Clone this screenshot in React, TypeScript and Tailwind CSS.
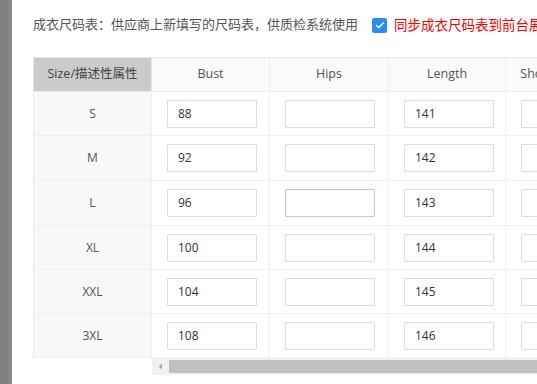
import React from "react";

const rows: { label: string; bust: string; length: string; h: number }[] = [
  { label: "S", bust: "88", length: "141", h: 44 },
  { label: "M", bust: "92", length: "142", h: 45 },
  { label: "L", bust: "96", length: "143", h: 45 },
  { label: "XL", bust: "100", length: "144", h: 44 },
  { label: "XXL", bust: "104", length: "145", h: 44 },
  { label: "3XL", bust: "108", length: "146", h: 44 },
];

const cols = [
  { name: "Bust", w: 118, key: "bust" },
  { name: "Hips", w: 119, key: "hips" },
  { name: "Length", w: 117, key: "length" },
  { name: "Shoulder Width", w: 120, key: "shoulder" },
];

function Cell({ value, focused }: { value: string; focused?: boolean }) {
  return (
    <div
      className={
        "ml-[15px] w-[90px] h-[28px] flex items-center pl-[10px] text-[12px] text-[#333] bg-white border rounded-[1px] " +
        (focused ? "border-[#b3cde2]" : "border-[#dcdcdc]")
      }
    >
      {value}
    </div>
  );
}

export default function App() {
  return (
    <div
      className="flex w-[537px] h-[384px] overflow-hidden bg-white"
      style={{ fontFamily: '"Open Sans","Noto Sans CJK SC",sans-serif' }}
    >
      <div className="w-[8px] shrink-0 bg-[#7f7f7f]" />
      <div className="w-[4px] shrink-0 bg-[#898989]" />
      <div className="flex-1 min-w-0 pl-[21px] pt-[14px]">
        <div className="flex items-center h-[22px] whitespace-nowrap text-[13px] text-[#555]">
          <span>成衣尺码表：供应商上新填写的尺码表，供质检系统使用</span>
          <span className="ml-[14px] w-[15px] h-[15px] shrink-0 rounded-[2px] bg-[#2d8cf0] flex items-center justify-center">
            <svg width="10" height="8" viewBox="0 0 10 8" fill="none">
              <path d="M1.2 4.2 L3.8 6.6 L8.8 1.4" stroke="white" strokeWidth="1.4" />
            </svg>
          </span>
          <span className="ml-[7px] text-[13.5px] text-[#f00]">同步成衣尺码表到前台展示</span>
        </div>

        <div className="mt-[21px] flex items-start">
          <div className="w-[119px] shrink-0 border-l border-t border-[#e9e9e9]">
            <div className="h-[34px] bg-[#cbcbcb] flex items-center justify-center text-[12.5px] text-[#444] border-r border-b border-[#e9e9e9] whitespace-nowrap">
              Size/描述性属性
            </div>
            {rows.map((r) => (
              <div
                key={r.label}
                className="bg-[#f8f8f8] flex items-center justify-center text-[12px] text-[#555] border-r border-b border-[#eeeeee]"
                style={{ height: r.h }}
              >
                {r.label}
              </div>
            ))}
          </div>

          <div className="flex-1 min-w-0 overflow-hidden">
            <div className="flex border-t border-[#e9e9e9]">
              {cols.map((c) => (
                <div
                  key={c.name}
                  className="shrink-0 h-[34px] bg-[#fafafa] flex items-center justify-center text-[12.5px] text-[#555] border-r border-b border-[#eeeeee] whitespace-nowrap"
                  style={{ width: c.w }}
                >
                  {c.name}
                </div>
              ))}
            </div>
            {rows.map((r) => (
              <div key={r.label} className="flex">
                {cols.map((c) => {
                  const v = c.key === "bust" ? r.bust : c.key === "length" ? r.length : "";
                  return (
                    <div
                      key={c.name}
                      className="shrink-0 flex items-center border-r border-b border-[#f0f0f0]"
                      style={{ width: c.w, height: r.h }}
                    >
                      <Cell value={v} focused={r.label === "L" && c.key === "hips"} />
                    </div>
                  );
                })}
              </div>
            ))}
            <div className="h-[17px] bg-[#f1f1f1] flex items-center">
              <div className="w-[17px] h-[17px] shrink-0 flex items-center justify-center">
                <svg width="5" height="7" viewBox="0 0 5 7">
                  <path d="M4 0.5 L0.8 3.5 L4 6.5 Z" fill="#a3a3a3" />
                </svg>
              </div>
              <div className="flex-1 h-[13px] bg-[#c1c1c1]" />
            </div>
          </div>
        </div>
      </div>
    </div>
  );
}
